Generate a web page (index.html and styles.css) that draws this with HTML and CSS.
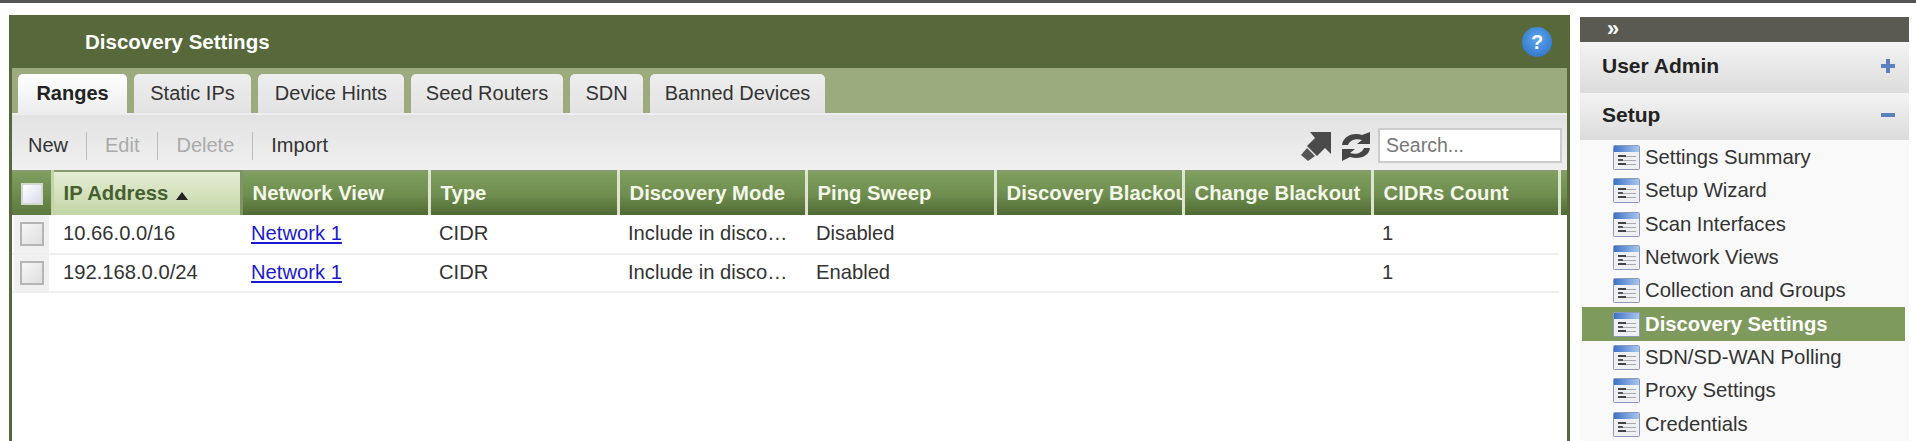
FILE: index.html
```html
<!DOCTYPE html>
<html lang="en">
<head>
    <meta charset="UTF-8">
    <meta name="viewport" content="width=device-width, initial-scale=1.0">
    <title>Discovery Settings</title>
    <link rel="stylesheet" href="styles.css">
</head>
<body>

<svg class="defs" width="0" height="0">
    <defs>
        <linearGradient id="page-band">
            <stop offset="0" stop-color="#3d73c8"/>
            <stop offset="1" stop-color="#a9c6ec"/>
        </linearGradient>
    </defs>
    <symbol id="page-icon" viewBox="0 0 27 25">
        <rect x="0.5" y="0.5" width="26" height="24" rx="1" fill="#eef0f4" stroke="#8a9ab8"/>
        <rect x="1" y="1" width="25" height="6" fill="url(#page-band)"/>
        <rect x="5" y="10" width="8" height="2" fill="#444"/>
        <rect x="13" y="11" width="10" height="1" fill="#aaa"/>
        <rect x="5" y="14" width="5" height="2" fill="#555"/>
        <rect x="10" y="15" width="13" height="1" fill="#aaa"/>
        <rect x="5" y="18" width="8" height="2" fill="#444"/>
        <rect x="13" y="19" width="10" height="1" fill="#aaa"/>
    </symbol>
</svg>

<div class="topbar"></div>

<div class="layout">
    <!-- Main panel -->
    <main class="panel">
        <div class="panel-title">
            <h1>Discovery Settings</h1>
            <span class="help">?</span>
        </div>

        <div class="tabs">
            <a class="tab tab-active">Ranges</a>
            <a class="tab tab-static">Static IPs</a>
            <a class="tab tab-hints">Device Hints</a>
            <a class="tab tab-seed">Seed Routers</a>
            <a class="tab tab-sdn">SDN</a>
            <a class="tab tab-banned">Banned Devices</a>
        </div>

        <div class="toolbar">
            <a class="tool">New</a>
            <a class="tool tool-off">Edit</a>
            <a class="tool tool-off">Delete</a>
            <a class="tool">Import</a>
            <svg class="tool-icon" viewBox="0 0 30 30">
                <polygon points="9,1 30,1 30,23 24,17 16,25 6,15 14,7" fill="#4a4a4a"/>
                <polygon points="6,17 14,25 7,30 0,24" fill="#555"/>
            </svg>
            <svg class="tool-icon tool-refresh" viewBox="0 0 30 30">
                <path d="M1 14 C2 6 11 1 21 4 L29 1 V13 H16 L21 9 C15 7 9 9 7 14 Z" fill="#444"/>
                <path d="M29 17 C28 25 19 29 9 26 L1 30 V18 H14 L9 22 C15 24 21 22 23 17 Z" fill="#444"/>
            </svg>
            <input class="search" type="text" placeholder="Search...">
        </div>

        <table class="grid">
            <colgroup>
                <col class="col-check">
                <col class="col-ip">
                <col class="col-a">
                <col class="col-b">
                <col class="col-a">
                <col class="col-b">
                <col class="col-a">
                <col class="col-b">
                <col class="col-count">
                <col class="col-end">
            </colgroup>
            <thead>
                <tr>
                    <th class="check-head"><span class="checkbox checkbox-head"></span></th>
                    <th class="sorted">IP Address <span class="sort-arrow"></span></th>
                    <th>Network View</th>
                    <th>Type</th>
                    <th>Discovery Mode</th>
                    <th>Ping Sweep</th>
                    <th>Discovery Blackout</th>
                    <th>Change Blackout</th>
                    <th>CIDRs Count</th>
                    <th></th>
                </tr>
            </thead>
            <tbody>
                <tr>
                    <td class="check-cell"><span class="checkbox"></span></td>
                    <td class="ip-cell">10.66.0.0/16</td>
                    <td><a href="#">Network 1</a></td>
                    <td>CIDR</td>
                    <td>Include in discovery</td>
                    <td>Disabled</td>
                    <td></td>
                    <td></td>
                    <td>1</td>
                    <td class="end-cell"></td>
                </tr>
                <tr>
                    <td class="check-cell"><span class="checkbox"></span></td>
                    <td class="ip-cell">192.168.0.0/24</td>
                    <td><a href="#">Network 1</a></td>
                    <td>CIDR</td>
                    <td>Include in discovery</td>
                    <td>Enabled</td>
                    <td></td>
                    <td></td>
                    <td>1</td>
                    <td class="end-cell"></td>
                </tr>
            </tbody>
        </table>
    </main>

    <!-- Side menu -->
    <aside class="side">
        <div class="side-head">&raquo;</div>
        <div class="acc acc-first">User Admin <span class="acc-plus"></span></div>
        <div class="acc">Setup <span class="acc-minus"></span></div>
        <ul class="menu">
            <li><svg class="menu-icon"><use href="#page-icon"/></svg>Settings Summary</li>
            <li><svg class="menu-icon"><use href="#page-icon"/></svg>Setup Wizard</li>
            <li><svg class="menu-icon"><use href="#page-icon"/></svg>Scan Interfaces</li>
            <li><svg class="menu-icon"><use href="#page-icon"/></svg>Network Views</li>
            <li><svg class="menu-icon"><use href="#page-icon"/></svg>Collection and Groups</li>
            <li class="current"><svg class="menu-icon"><use href="#page-icon"/></svg>Discovery Settings</li>
            <li><svg class="menu-icon"><use href="#page-icon"/></svg>SDN/SD-WAN Polling</li>
            <li><svg class="menu-icon"><use href="#page-icon"/></svg>Proxy Settings</li>
            <li><svg class="menu-icon"><use href="#page-icon"/></svg>Credentials</li>
        </ul>
    </aside>
</div>

</body>
</html>
```

FILE: styles.css
```css
* {
    box-sizing: border-box;
}
html, body {
    height: 100%;
}
body {
    margin: 0;
    background: #fff;
    color: #333;
    font-family: "Liberation Sans", Arial, sans-serif;
    overflow: hidden;
}
.defs {
    position: absolute;
}
.topbar {
    height: 3px;
    background: #555;
}
.layout {
    display: flex;
    align-items: stretch;
    height: 438px;
    padding: 12px 7px 0 9px;
    gap: 10px;
}

/* Main panel */
.panel {
    width: 1561px;
    flex: none;
    border-left: 3px solid #57693a;
    border-right: 3px solid #57693a;
}
.panel-title {
    display: flex;
    align-items: center;
    justify-content: space-between;
    height: 53px;
    margin: 0 -3px;
    padding: 0 18px 0 76px;
    background: #57693a;
}
.panel-title h1 {
    margin: 0;
    color: #fff;
    font-size: 20.5px;
    font-weight: bold;
}
.help {
    width: 30px;
    height: 30px;
    border-radius: 50%;
    background: radial-gradient(circle at 50% 40%, #5aa6ee, #2a6cc0);
    color: #fff;
    font-size: 20px;
    font-weight: bold;
    line-height: 30px;
    text-align: center;
}
.tabs {
    display: flex;
    gap: 7px;
    height: 45px;
    padding: 6px 0 0 6px;
    background: #9cab7d;
}
.tab {
    height: 39px;
    padding-top: 8px;
    background: linear-gradient(to bottom, #eee, #e2e2e2);
    border-radius: 5px 5px 0 0;
    color: #333;
    font-size: 20px;
    text-align: center;
}
.tab-active {
    width: 109px;
    height: 41px;
    background: linear-gradient(to bottom, #fff, #ececec);
    color: #222;
    font-weight: bold;
}
.tab-static { width: 117px; }
.tab-hints { width: 146px; }
.tab-seed { width: 152px; }
.tab-sdn { width: 73px; }
.tab-banned { width: 175px; }
.toolbar {
    display: flex;
    align-items: center;
    height: 57px;
    padding: 6px 5px 0 16px;
    background: linear-gradient(to bottom, #e2e2e2, #f0f0f0);
    border-top: 2px solid #eee;
}
.tool {
    display: flex;
    align-items: center;
    height: 28px;
    padding-right: 18px;
    margin-right: 18px;
    border-right: 1px solid #bbb;
    color: #333;
    font-size: 20px;
}
.tool-off {
    color: #aaa;
}
.tool:nth-child(4) {
    border-right: none;
    margin-right: 0;
}
.tool-icon {
    width: 30px;
    height: 30px;
    margin-left: auto;
}
.tool-refresh {
    margin-left: 10px;
}
.search {
    width: 184px;
    height: 35px;
    margin-left: 7px;
    padding: 0 6px;
    background: #fff;
    border: 2px solid #ccc;
    font-family: inherit;
    font-size: 19.5px;
}
.search::placeholder {
    color: #777;
}

/* Grid */
.grid {
    width: 1555px;
    border-collapse: collapse;
    table-layout: fixed;
}
.col-check { width: 40px; }
.col-ip { width: 189px; }
.col-a { width: 188px; }
.col-b { width: 189px; }
.col-count { width: 187px; }
.col-end { width: 8px; }
.grid th {
    height: 44px;
    padding: 0 0 0 10px;
    background: linear-gradient(to bottom, #7f9f5f, #6d8c4e 55%, #4f6a33);
    border-right: 3px solid #dde4d0;
    border-top: 2px solid #8a9a70;
    color: #f4f7ea;
    font-size: 20.3px;
    font-weight: bold;
    text-align: left;
    white-space: nowrap;
    overflow: hidden;
}
.grid th:last-child {
    border-right: none;
}
.grid th.sorted {
    background: linear-gradient(to bottom, #e4edd4, #c3d5a6);
    border-right-color: #7f9463;
    color: #45602e;
}
.grid th.check-head {
    padding: 0 0 0 9px;
    background: linear-gradient(to bottom, #7f9f5f, #5c7a3e);
    border-right-color: #c3d5a6;
}
.sort-arrow {
    display: inline-block;
    width: 0;
    height: 0;
    margin-left: 2px;
    border-left: 6.5px solid transparent;
    border-right: 6.5px solid transparent;
    border-bottom: 8px solid #222;
}
.grid td {
    height: 38.5px;
    padding: 0 18px 0 10px;
    border-bottom: 2px solid #eee;
    color: #333;
    font-size: 20.2px;
    white-space: nowrap;
    overflow: hidden;
    text-overflow: ellipsis;
}
.grid td a {
    color: #1a1ad0;
}
.grid td.ip-cell {
    padding-left: 11px;
}
.grid td.check-cell {
    padding: 0 0 0 8px;
    background: linear-gradient(to right, #fff 2px, #f0f0f0 2px, #f0f0f0 37px, #fff 37px);
}
.grid td.end-cell {
    padding: 0;
    border-bottom: none;
}
.checkbox {
    display: block;
    width: 24px;
    height: 24px;
    background: linear-gradient(135deg, #f6f6f6, #dedede);
    border: 2px solid #b5b5b5;
}
.checkbox-head {
    width: 22px;
    height: 22px;
    background: linear-gradient(135deg, #fff, #d9dcec);
    border-color: #d5d8d0;
}

/* Side menu */
.side {
    width: 329px;
    flex: none;
    margin-top: 2px;
    background: #f9f9f9;
}
.side-head {
    height: 25px;
    padding-left: 27px;
    background: #5a5a52;
    color: #fff;
    font-size: 22px;
    font-weight: bold;
    line-height: 24px;
}
.acc {
    display: flex;
    align-items: center;
    justify-content: space-between;
    height: 47px;
    padding: 0 14px 4px 22px;
    background: linear-gradient(to bottom, #f3f3f3, #dcdcdc);
    color: #222;
    font-size: 21px;
    font-weight: bold;
}
.acc-first {
    height: 51px;
}
.acc-plus, .acc-minus {
    position: relative;
    width: 14px;
    height: 4px;
    background: #5b80c0;
}
.acc-plus::after {
    content: "";
    position: absolute;
    left: 5px;
    top: -5px;
    width: 4px;
    height: 14px;
    background: #5b80c0;
}
.menu {
    margin: 0;
    padding: 1px 0 0 2px;
    list-style: none;
}
.menu li {
    display: flex;
    align-items: center;
    gap: 5px;
    width: 323px;
    height: 33.3px;
    padding-left: 31px;
    color: #333;
    font-size: 20.3px;
}
.menu li.current {
    background: #7f9a5d;
    color: #fff;
    font-weight: bold;
}
.menu-icon {
    width: 27px;
    height: 25px;
    flex: none;
}
```
